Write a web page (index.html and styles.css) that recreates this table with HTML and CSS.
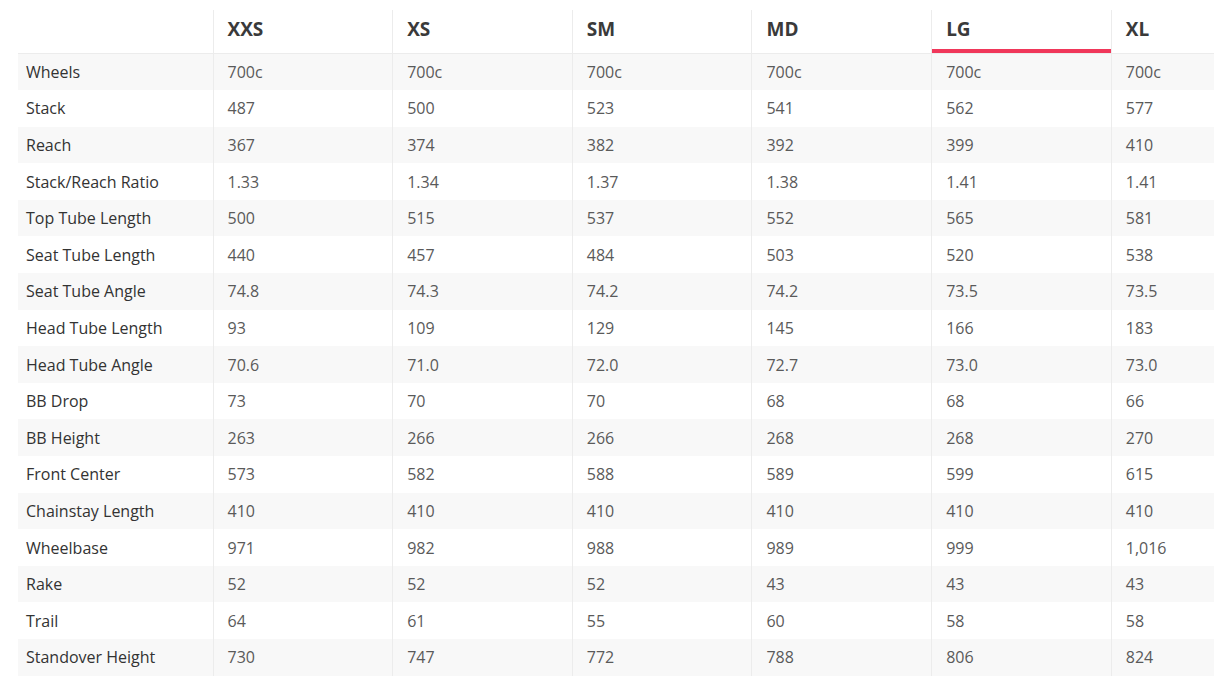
FILE: index.html
```html
<!DOCTYPE html>
<html>
<head>
<meta charset="utf-8">
<link rel="stylesheet" href="styles.css">
</head>
<body>
<div class="wrap">
<table class="geo">
<thead>
<tr><th class="lbl"></th><th>XXS</th><th>XS</th><th>SM</th><th>MD</th><th class="active">LG</th><th>XL</th></tr>
</thead>
<tbody>
<tr><td class="lbl">Wheels</td><td>700c</td><td>700c</td><td>700c</td><td>700c</td><td>700c</td><td>700c</td></tr>
<tr><td class="lbl">Stack</td><td>487</td><td>500</td><td>523</td><td>541</td><td>562</td><td>577</td></tr>
<tr><td class="lbl">Reach</td><td>367</td><td>374</td><td>382</td><td>392</td><td>399</td><td>410</td></tr>
<tr><td class="lbl">Stack/Reach Ratio</td><td>1.33</td><td>1.34</td><td>1.37</td><td>1.38</td><td>1.41</td><td>1.41</td></tr>
<tr><td class="lbl">Top Tube Length</td><td>500</td><td>515</td><td>537</td><td>552</td><td>565</td><td>581</td></tr>
<tr><td class="lbl">Seat Tube Length</td><td>440</td><td>457</td><td>484</td><td>503</td><td>520</td><td>538</td></tr>
<tr><td class="lbl">Seat Tube Angle</td><td>74.8</td><td>74.3</td><td>74.2</td><td>74.2</td><td>73.5</td><td>73.5</td></tr>
<tr><td class="lbl">Head Tube Length</td><td>93</td><td>109</td><td>129</td><td>145</td><td>166</td><td>183</td></tr>
<tr><td class="lbl">Head Tube Angle</td><td>70.6</td><td>71.0</td><td>72.0</td><td>72.7</td><td>73.0</td><td>73.0</td></tr>
<tr><td class="lbl">BB Drop</td><td>73</td><td>70</td><td>70</td><td>68</td><td>68</td><td>66</td></tr>
<tr><td class="lbl">BB Height</td><td>263</td><td>266</td><td>266</td><td>268</td><td>268</td><td>270</td></tr>
<tr><td class="lbl">Front Center</td><td>573</td><td>582</td><td>588</td><td>589</td><td>599</td><td>615</td></tr>
<tr><td class="lbl">Chainstay Length</td><td>410</td><td>410</td><td>410</td><td>410</td><td>410</td><td>410</td></tr>
<tr><td class="lbl">Wheelbase</td><td>971</td><td>982</td><td>988</td><td>989</td><td>999</td><td>1,016</td></tr>
<tr><td class="lbl">Rake</td><td>52</td><td>52</td><td>52</td><td>43</td><td>43</td><td>43</td></tr>
<tr><td class="lbl">Trail</td><td>64</td><td>61</td><td>55</td><td>60</td><td>58</td><td>58</td></tr>
<tr><td class="lbl">Standover Height</td><td>730</td><td>747</td><td>772</td><td>788</td><td>806</td><td>824</td></tr>
</tbody>
</table>
</div>
</body>
</html>
```
FILE: styles.css
```css
html, body {
  margin: 0;
  padding: 0;
  background: #fff;
  overflow: hidden;
}
.wrap {
  padding: 10px 0 0 18px;
  width: 1300px;
}
.geo {
  border-collapse: collapse;
  table-layout: fixed;
  width: 1273px;
  font-family: "Open Sans", sans-serif;
  color: #5a5a5a;
}
.geo th, .geo td {
  text-align: left;
  padding: 0 0 0 14px;
  border-left: 1px solid #ececec;
  white-space: nowrap;
}
.geo th:first-child, .geo td:first-child {
  border-left: none;
  width: 195px;
  padding-left: 8px;
}
.geo th {
  height: 43px;
  box-sizing: border-box;
  font-size: 19px;
  font-weight: 700;
  color: #3a3a3a;
  border-bottom: 1px solid #ececec;
  vertical-align: middle;
  padding-bottom: 5px;
}
.geo th.active {
  box-shadow: inset 0 -4px 0 #f0375a;
}
.geo td {
  height: 36.6px;
  font-size: 16px;
}
.geo td.lbl {
  color: #333;
}
.geo tbody tr:nth-child(odd) {
  background: #f8f8f8;
}
```
